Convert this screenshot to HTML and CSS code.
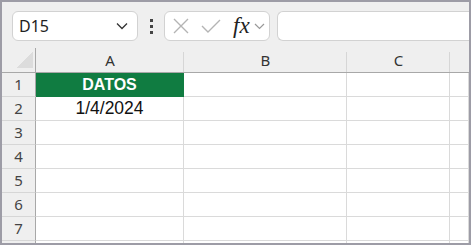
FILE: index.html
```html
<!DOCTYPE html>
<html lang="es">
<head>
  <meta charset="UTF-8">
  <title>Hoja de cálculo</title>
  <link rel="stylesheet" href="styles.css">
</head>
<body>
  <div class="window">
    <!-- Formula bar -->
    <div class="toolbar">
      <div class="namebox">
        <span class="cellref">D15</span>
        <svg class="chev" width="12" height="8" viewBox="0 0 12 8"><path d="M1 1.5 L6 6.5 L11 1.5" fill="none" stroke="#333" stroke-width="1.3"/></svg>
      </div>
      <div class="dots"><i></i><i></i><i></i></div>
      <div class="fxgroup">
        <svg width="18" height="16" viewBox="0 0 18 16"><path d="M2 1 L16 15 M16 1 L2 15" stroke="#b4b4b4" stroke-width="1.4" fill="none"/></svg>
        <svg width="20" height="14" viewBox="0 0 20 14"><path d="M1 7 L7 13 L19 1" stroke="#b4b4b4" stroke-width="1.4" fill="none"/></svg>
        <span class="fx">fx</span>
        <svg width="11" height="7" viewBox="0 0 11 7"><path d="M1 1 L5.5 5.5 L10 1" fill="none" stroke="#999" stroke-width="1.2"/></svg>
      </div>
      <div class="formula"></div>
    </div>

    <!-- Grid -->
    <div class="sheet">
      <div class="corner"><span class="tri"></span></div>
      <div class="colhead">A</div>
      <div class="colhead">B</div>
      <div class="colhead">C</div>
      <div class="colhead last"></div>

      <div class="rowhead">1</div>
      <div class="cell title">DATOS</div>
      <div class="cell"></div><div class="cell"></div><div class="cell"></div>

      <div class="rowhead">2</div>
      <div class="cell val">1/4/2024</div>
      <div class="cell"></div><div class="cell"></div><div class="cell"></div>

      <div class="rowhead">3</div>
      <div class="cell"></div><div class="cell"></div><div class="cell"></div><div class="cell"></div>
      <div class="rowhead">4</div>
      <div class="cell"></div><div class="cell"></div><div class="cell"></div><div class="cell"></div>
      <div class="rowhead">5</div>
      <div class="cell"></div><div class="cell"></div><div class="cell"></div><div class="cell"></div>
      <div class="rowhead">6</div>
      <div class="cell"></div><div class="cell"></div><div class="cell"></div><div class="cell"></div>
      <div class="rowhead">7</div>
      <div class="cell"></div><div class="cell"></div><div class="cell"></div><div class="cell"></div>
      <div class="rowhead"></div>
      <div class="cell"></div><div class="cell"></div><div class="cell"></div><div class="cell"></div>
    </div>
  </div>
</body>
</html>
```

FILE: styles.css
```css
* { box-sizing: border-box; }
body { margin: 0; padding: 0; font-family: "Noto Sans", sans-serif; }

.window {
  width: 471px;
  height: 245px;
  border: 2px solid #9d9ca6;
  background: #efefef;
  overflow: hidden;
}

/* formula bar */
.toolbar { display: flex; align-items: center; height: 46px; padding: 9px 0 7px 10px; }
.namebox {
  width: 126px; height: 30px;
  background: #fff; border: 1px solid #d2d2d2; border-radius: 6px;
  display: flex; align-items: center; justify-content: space-between;
  padding: 0 9px 0 6px;
}
.cellref { font-size: 16px; color: #222; }
.dots { width: 26px; display: flex; flex-direction: column; align-items: center; gap: 3px; }
.dots i { width: 3px; height: 3px; background: #444; display: block; }
.fxgroup {
  width: 106px; height: 30px;
  background: #fff; border: 1px solid #d2d2d2; border-radius: 6px;
  display: flex; align-items: center; gap: 11px; padding-left: 7px;
}
.fx { font-family: "Liberation Serif", serif; font-style: italic; font-size: 23px; line-height: 24px; color: #222; margin-left: 1px; margin-right: -7px; letter-spacing: 0; }
.formula {
  flex: 1; height: 30px; margin-left: 7px;
  background: #fff; border: 1px solid #d2d2d2; border-right: none;
  border-radius: 6px 0 0 6px;
}

/* grid */
.sheet {
  display: grid;
  grid-template-columns: 34px 148px 163px 103px 1fr;
  grid-template-rows: 25px repeat(8, 24px);
  background: #fff;
}
.corner { background: #efefef; border-bottom: 1px solid #a8a8a8; border-right: 1px solid #a8a8a8; padding: 0 0 4px 15px; display: flex; align-items: flex-end; }
.tri { width: 16px; height: 16px; background: linear-gradient(135deg, transparent 50%, #dcdcdc 50%); }
.colhead {
  background: #efefef linear-gradient(#d6d6d6, #d6d6d6) right 4px / 1px 100% no-repeat;
  border-bottom: 1px solid #a8a8a8;
  text-align: center; font-size: 15px; line-height: 24px; color: #333;
}
.colhead.last { background: #efefef; }
.rowhead {
  background: #efefef; border-right: 1px solid #a8a8a8; border-bottom: 1px solid #d6d6d6;
  text-align: center; font-size: 15px; line-height: 23px; color: #444;
}
.cell { border-right: 1px solid #dadada; border-bottom: 1px solid #dadada; }
.cell.title {
  background: #107c41; color: #fff; border-color: #107c41;
  font-family: "Liberation Sans", Arial, sans-serif; font-weight: bold; font-size: 16px;
  text-align: center; line-height: 23px;
}
.cell.val {
  font-family: "Liberation Sans", Arial, sans-serif; font-size: 17.5px; color: #111;
  text-align: center; line-height: 23px;
}
```
